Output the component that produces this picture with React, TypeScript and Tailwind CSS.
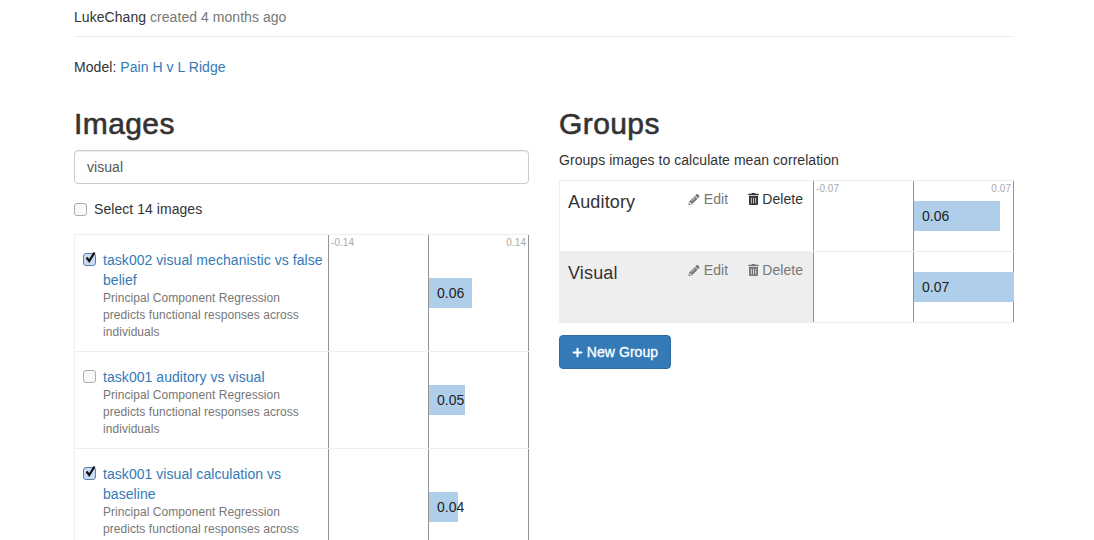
import { FaPencilAlt, FaPlus, FaTrashAlt } from "react-icons/fa";

const desc = "Principal Component Regression predicts functional responses across individuals";

const images = [
  { title: "task002 visual mechanistic vs false belief", checked: true, value: "0.06", bar: 43 },
  { title: "task001 auditory vs visual", checked: false, value: "0.05", bar: 36 },
  { title: "task001 visual calculation vs baseline", checked: true, value: "0.04", bar: 29 },
];

const groups = [
  { name: "Auditory", value: "0.06", bar: 86, active: false },
  { name: "Visual", value: "0.07", bar: 100, active: true },
];

const Check = ({ checked }: { checked: boolean }) => (
  <span className="relative block h-[13px] w-[13px] shrink-0">
    <input
      type="checkbox"
      readOnly
      checked={checked}
      className={
        checked
          ? "block h-[13px] w-[13px] appearance-none rounded-[3px] border border-[#5f7fa8] bg-[#c9dcf3]"
          : "block h-[13px] w-[13px] appearance-none rounded-[3px] border border-[#adadad] bg-[#f9f9f9]"
      }
    />
    {checked && (
      <svg viewBox="0 0 13 13" className="pointer-events-none absolute left-[1px] top-[-2px] h-[13px] w-[13px]">
        <path d="M2.5 6.5 L5.2 10 L10.5 1.5" fill="none" stroke="#111" strokeWidth="2.2" />
      </svg>
    )}
  </span>
);

const Chart = ({ value, bar, min, max }: { value: string; bar: number; min?: string; max?: string }) => (
  <div className="flex w-[201px] shrink-0">
    <div className="relative w-[100px] border-l border-[#929292]">
      {min && <span className="absolute left-[2px] top-[2px] text-[10px] leading-[12px] text-[#aaa]">{min}</span>}
    </div>
    <div className="relative flex w-[101px] items-center border-x border-[#929292]">
      {max && <span className="absolute right-[2px] top-[2px] text-[10px] leading-[12px] text-[#aaa]">{max}</span>}
      <div className="h-[30px] shrink-0 whitespace-nowrap bg-[#aecee9] pl-2 leading-[30px] text-[#222]" style={{ width: bar }}>
        {value}
      </div>
    </div>
  </div>
);

export default function App() {
  return (
    <div className="h-[540px] overflow-hidden bg-white font-['Liberation_Sans',Arial,sans-serif] text-sm leading-5 tracking-[0.05px] text-[#333]">
      <div className="mx-auto w-[940px] -translate-x-[3px] pt-[7px]">
        <div className="border-b border-[#eee] pb-[9px]">
          LukeChang <span className="text-[#777]">created 4 months ago</span>
        </div>
        <p className="mt-5">
          Model: <a className="text-[#337ab7]">Pain H v L Ridge</a>
        </p>

        <div className="mt-[30px] grid grid-cols-[455px_455px] gap-[30px]">
          <section>
            <h2 className="text-[30px] leading-[33px] font-medium tracking-[0.4px] [-webkit-text-stroke:0.6px_#333]">Images</h2>
            <input
              readOnly
              value="visual"
              className="mt-[10px] block h-[34px] w-full rounded-[4px] border border-[#ccc] px-3 text-[#555] shadow-[inset_0_1px_1px_rgba(0,0,0,0.075)]"
            />
            <label className="mt-[15px] flex items-center gap-[7px]">
              <Check checked={false} />
              <span>Select 14 images</span>
            </label>
            <div className="mt-[15px]">
              {images.map((im) => (
                <div key={im.title} className="flex border-t border-[#eee]">
                  <div className="flex w-[254px] shrink-0 gap-[7px] border-l border-[#eee] pb-[10px] pl-2 pt-[15px]">
                    <span className="pt-[3px]">
                      <Check checked={im.checked} />
                    </span>
                    <div className="w-[225px]">
                      <a className="block text-[#337ab7]">{im.title}</a>
                      <p className="w-[205px] text-xs leading-[17px] text-[#777]">{desc}</p>
                    </div>
                  </div>
                  <Chart
                    value={im.value}
                    bar={im.bar}
                    min={im === images[0] ? "-0.14" : undefined}
                    max={im === images[0] ? "0.14" : undefined}
                  />
                </div>
              ))}
            </div>
          </section>

          <section>
            <h2 className="text-[30px] leading-[33px] font-medium tracking-[0.4px] [-webkit-text-stroke:0.6px_#333]">Groups</h2>
            <p className="mt-[10px]">Groups images to calculate mean correlation</p>
            <div className="mt-[10px] border-b border-[#eee]">
              {groups.map((g) => (
                <div key={g.name} className="flex h-[71px] border-t border-[#eee]">
                  <div
                    className={
                      g.active
                        ? "flex w-[254px] shrink-0 items-start bg-[#eee] pl-[9px] pr-[10px] pt-2"
                        : "flex w-[254px] shrink-0 items-start border-l border-[#eee] pl-2 pr-[10px] pt-2"
                    }
                  >
                    <span className="w-[121px] pt-[3px] text-lg leading-[20px] tracking-[0.15px]">{g.name}</span>
                    <a className="flex w-[60px] items-center gap-[4px] text-[#777]">
                      <FaPencilAlt className="h-[11px] w-[12px]" />
                      Edit
                    </a>
                    <a className={g.active ? "flex items-center gap-[3px] text-[#777]" : "flex items-center gap-[3px] text-[#333]"}>
                      <FaTrashAlt className="ml-[1px] h-[12px] w-[11px]" />
                      Delete
                    </a>
                  </div>
                  <Chart
                    value={g.value}
                    bar={g.bar}
                    min={g.active ? undefined : "-0.07"}
                    max={g.active ? undefined : "0.07"}
                  />
                </div>
              ))}
            </div>
            <button className="mt-3 flex h-[34px] w-[112px] items-center justify-center gap-[4px] rounded-[4px] border border-[#2e6da4] bg-[#337ab7] text-white [-webkit-text-stroke:0.3px_#fff]">
              <FaPlus className="h-[11px] w-[11px]" />
              New Group
            </button>
          </section>
        </div>
      </div>
    </div>
  );
}
